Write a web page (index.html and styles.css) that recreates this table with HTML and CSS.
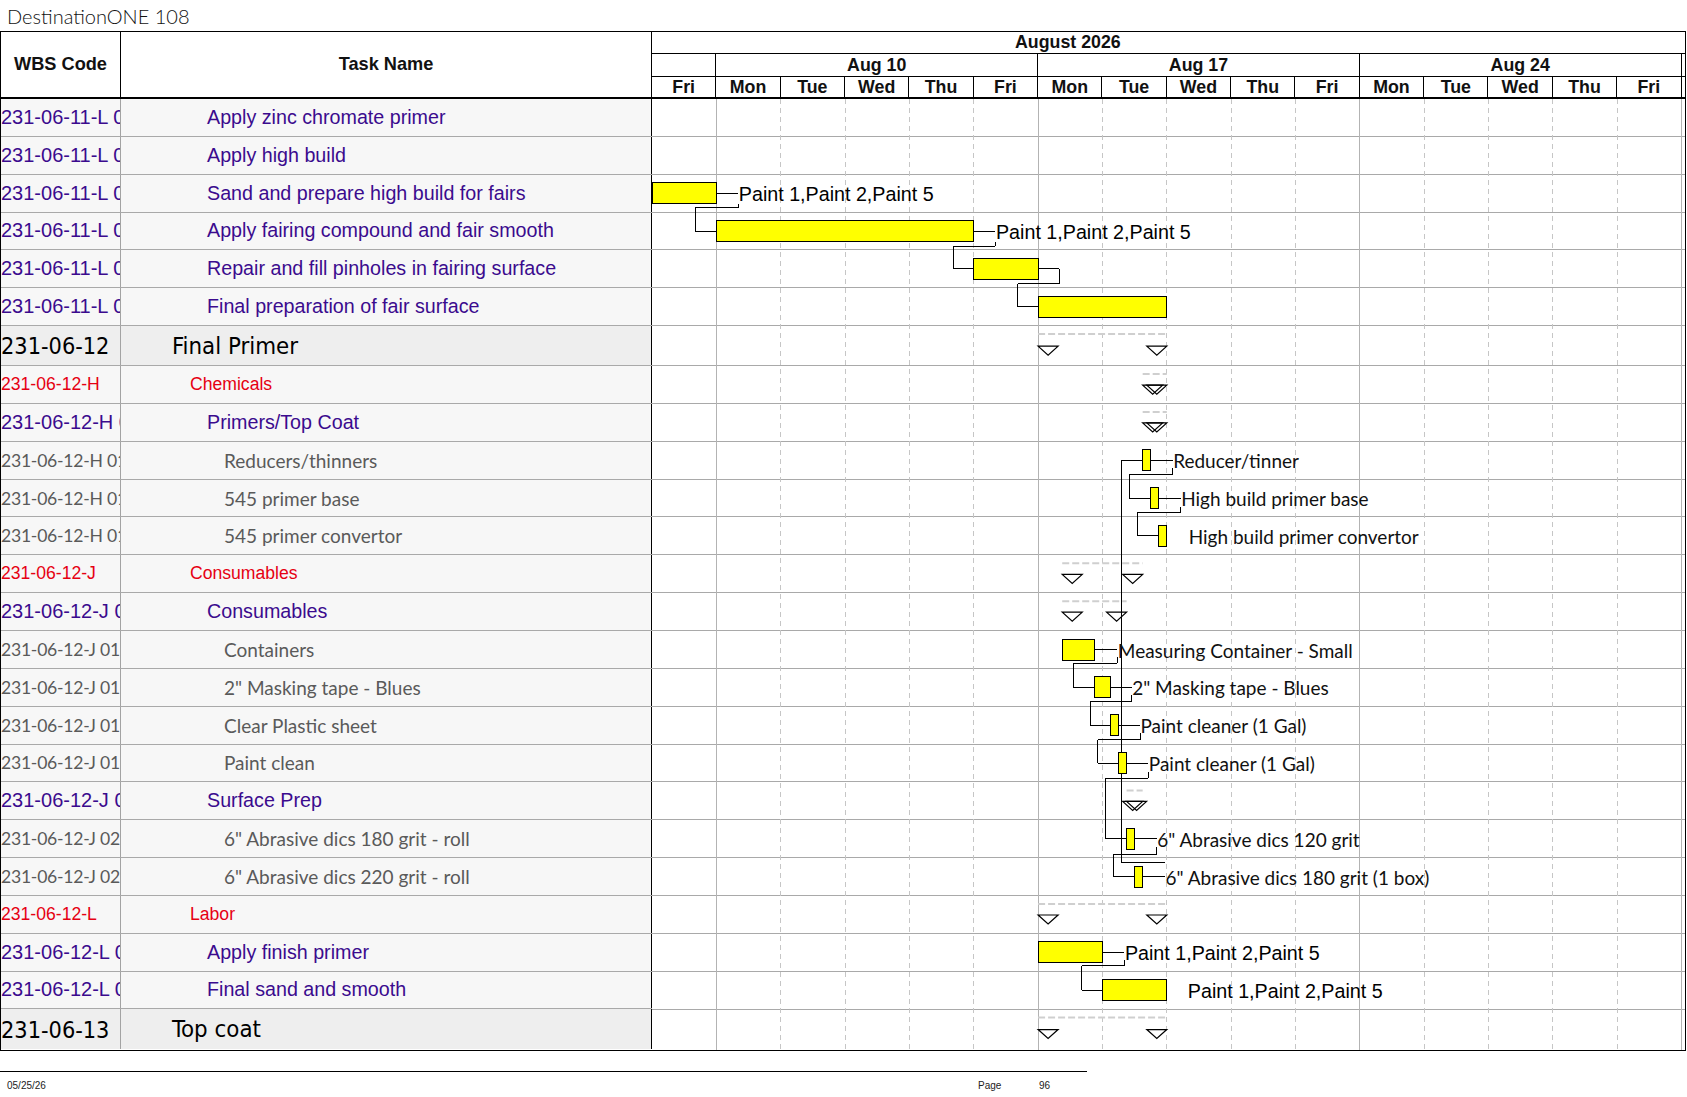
FILE: index.html
```html
<!DOCTYPE html>
<html>
<head>
<meta charset="utf-8">
<title>DestinationONE 108</title>
<link rel="stylesheet" href="styles.css">
</head>
<body>
<div class="page">
  <div class="title">DestinationONE 108</div>
  <div class="sheet">
    <div class="head">
      <div class="h-wbs">WBS Code</div>
      <div class="h-task">Task Name</div>
      <div class="h-time">
        <div class="month"><span>August 2026</span></div>
        <div class="weeks">
          <div class="wk first"></div>
          <div class="wk">Aug 10</div>
          <div class="wk">Aug 17</div>
          <div class="wk">Aug 24</div>
          <div class="wk rest"></div>
        </div>
        <div class="days">
          <div class="dy">Fri</div>
          <div class="dy">Mon</div><div class="dy">Tue</div><div class="dy">Wed</div><div class="dy">Thu</div><div class="dy">Fri</div>
          <div class="dy">Mon</div><div class="dy">Tue</div><div class="dy">Wed</div><div class="dy">Thu</div><div class="dy">Fri</div>
          <div class="dy">Mon</div><div class="dy">Tue</div><div class="dy">Wed</div><div class="dy">Thu</div><div class="dy">Fri</div>
          <div class="dy rest"></div>
        </div>
      </div>
    </div>
    <div class="body">
      <div class="table">
        <div class="row l3"><div class="wbs">231-06-11-L 01</div><div class="task">Apply zinc chromate primer</div></div>
        <div class="row l3"><div class="wbs">231-06-11-L 02</div><div class="task">Apply high build</div></div>
        <div class="row l3"><div class="wbs">231-06-11-L 03</div><div class="task">Sand and prepare high build for fairs</div></div>
        <div class="row l3"><div class="wbs">231-06-11-L 04</div><div class="task">Apply fairing compound and fair smooth</div></div>
        <div class="row l3"><div class="wbs">231-06-11-L 05</div><div class="task">Repair and fill pinholes in fairing surface</div></div>
        <div class="row l3"><div class="wbs">231-06-11-L 06</div><div class="task">Final preparation of fair surface</div></div>
        <div class="row l1"><div class="wbs">231-06-12</div><div class="task">Final Primer</div></div>
        <div class="row l2"><div class="wbs">231-06-12-H</div><div class="task">Chemicals</div></div>
        <div class="row l3"><div class="wbs">231-06-12-H 01</div><div class="task">Primers/Top Coat</div></div>
        <div class="row l4"><div class="wbs">231-06-12-H 01.01</div><div class="task">Reducers/thinners</div></div>
        <div class="row l4"><div class="wbs">231-06-12-H 01.02</div><div class="task">545 primer base</div></div>
        <div class="row l4"><div class="wbs">231-06-12-H 01.03</div><div class="task">545 primer convertor</div></div>
        <div class="row l2"><div class="wbs">231-06-12-J</div><div class="task">Consumables</div></div>
        <div class="row l3"><div class="wbs">231-06-12-J 01</div><div class="task">Consumables</div></div>
        <div class="row l4"><div class="wbs">231-06-12-J 01.01</div><div class="task">Containers</div></div>
        <div class="row l4"><div class="wbs">231-06-12-J 01.02</div><div class="task">2" Masking tape - Blues</div></div>
        <div class="row l4"><div class="wbs">231-06-12-J 01.03</div><div class="task">Clear Plastic sheet</div></div>
        <div class="row l4"><div class="wbs">231-06-12-J 01.04</div><div class="task">Paint clean</div></div>
        <div class="row l3"><div class="wbs">231-06-12-J 02</div><div class="task">Surface Prep</div></div>
        <div class="row l4"><div class="wbs">231-06-12-J 02.01</div><div class="task">6" Abrasive dics 180 grit - roll</div></div>
        <div class="row l4"><div class="wbs">231-06-12-J 02.02</div><div class="task">6" Abrasive dics 220 grit - roll</div></div>
        <div class="row l2"><div class="wbs">231-06-12-L</div><div class="task">Labor</div></div>
        <div class="row l3"><div class="wbs">231-06-12-L 01</div><div class="task">Apply finish primer</div></div>
        <div class="row l3"><div class="wbs">231-06-12-L 02</div><div class="task">Final sand and smooth</div></div>
        <div class="row l1 last"><div class="wbs">231-06-13</div><div class="task">Top coat</div></div>
      </div>
      <svg class="chart" width="1033" height="950.55" viewBox="0 0 1033 950.55" xmlns="http://www.w3.org/2000/svg">
        <g class="grid-h" shape-rendering="crispEdges">
          <line x1="0" x2="1033" y1="37.35" y2="37.35"/>
          <line x1="0" x2="1033" y1="75.2" y2="75.2"/>
          <line x1="0" x2="1033" y1="113.05" y2="113.05"/>
          <line x1="0" x2="1033" y1="150.9" y2="150.9"/>
          <line x1="0" x2="1033" y1="188.75" y2="188.75"/>
          <line x1="0" x2="1033" y1="226.6" y2="226.6"/>
          <line x1="0" x2="1033" y1="266.6" y2="266.6"/>
          <line x1="0" x2="1033" y1="304.45" y2="304.45"/>
          <line x1="0" x2="1033" y1="342.3" y2="342.3"/>
          <line x1="0" x2="1033" y1="380.15" y2="380.15"/>
          <line x1="0" x2="1033" y1="418" y2="418"/>
          <line x1="0" x2="1033" y1="455.85" y2="455.85"/>
          <line x1="0" x2="1033" y1="493.7" y2="493.7"/>
          <line x1="0" x2="1033" y1="531.55" y2="531.55"/>
          <line x1="0" x2="1033" y1="569.4" y2="569.4"/>
          <line x1="0" x2="1033" y1="607.25" y2="607.25"/>
          <line x1="0" x2="1033" y1="645.1" y2="645.1"/>
          <line x1="0" x2="1033" y1="682.95" y2="682.95"/>
          <line x1="0" x2="1033" y1="720.8" y2="720.8"/>
          <line x1="0" x2="1033" y1="758.65" y2="758.65"/>
          <line x1="0" x2="1033" y1="796.5" y2="796.5"/>
          <line x1="0" x2="1033" y1="834.35" y2="834.35"/>
          <line x1="0" x2="1033" y1="872.2" y2="872.2"/>
          <line x1="0" x2="1033" y1="910.05" y2="910.05"/>
        </g>
        <g class="grid-week" shape-rendering="crispEdges">
          <line x1="64.35" x2="64.35" y1="0" y2="951"/>
          <line x1="386.1" x2="386.1" y1="0" y2="951"/>
          <line x1="707.85" x2="707.85" y1="0" y2="951"/>
          <line x1="1029.6" x2="1029.6" y1="0" y2="951"/>
        </g>
        <g class="grid-day" shape-rendering="crispEdges">
          <line x1="128.7" x2="128.7" y1="0" y2="951"/>
          <line x1="193.05" x2="193.05" y1="0" y2="951"/>
          <line x1="257.4" x2="257.4" y1="0" y2="951"/>
          <line x1="321.75" x2="321.75" y1="0" y2="951"/>
          <line x1="450.45" x2="450.45" y1="0" y2="951"/>
          <line x1="514.8" x2="514.8" y1="0" y2="951"/>
          <line x1="579.15" x2="579.15" y1="0" y2="951"/>
          <line x1="643.5" x2="643.5" y1="0" y2="951"/>
          <line x1="772.2" x2="772.2" y1="0" y2="951"/>
          <line x1="836.55" x2="836.55" y1="0" y2="951"/>
          <line x1="900.9" x2="900.9" y1="0" y2="951"/>
          <line x1="965.25" x2="965.25" y1="0" y2="951"/>
        </g>

        <g class="summary">
          <line x1="386.1" x2="514.8" y1="235.1" y2="235.1"/>
          <line x1="490.67" x2="514.8" y1="275.1" y2="275.1"/>
          <line x1="490.67" x2="514.8" y1="312.95" y2="312.95"/>
          <line x1="410.23" x2="490.67" y1="464.35" y2="464.35"/>
          <line x1="410.23" x2="474.58" y1="502.2" y2="502.2"/>
          <line x1="474.58" x2="490.67" y1="691.45" y2="691.45"/>
          <line x1="386.1" x2="514.8" y1="805" y2="805"/>
          <line x1="386.1" x2="514.8" y1="918.55" y2="918.55"/>
        </g>
        <g class="tri">
          <polygon points="386.1,247.1 406.1,247.1 396.1,256.1"/>
          <polygon points="494.8,247.1 514.8,247.1 504.8,256.1"/>
          <polygon points="490.67,286.1 510.67,286.1 500.67,295.1"/>
          <polygon points="494.8,286.1 514.8,286.1 504.8,295.1"/>
          <polygon points="490.67,323.95 510.67,323.95 500.67,332.95"/>
          <polygon points="494.8,323.95 514.8,323.95 504.8,332.95"/>
          <polygon points="410.23,475.35 430.23,475.35 420.23,484.35"/>
          <polygon points="470.67,475.35 490.67,475.35 480.67,484.35"/>
          <polygon points="410.23,513.2 430.23,513.2 420.23,522.2"/>
          <polygon points="454.58,513.2 474.58,513.2 464.58,522.2"/>
          <polygon points="474.58,702.45 494.58,702.45 484.58,711.45"/>
          <polygon points="470.67,702.45 490.67,702.45 480.67,711.45"/>
          <polygon points="386.1,816 406.1,816 396.1,825"/>
          <polygon points="494.8,816 514.8,816 504.8,825"/>
          <polygon points="386.1,930.55 406.1,930.55 396.1,939.55"/>
          <polygon points="494.8,930.55 514.8,930.55 504.8,939.55"/>
        </g>

        <g class="links" shape-rendering="crispEdges">
          <line x1="64.35" x2="86.2" y1="94.2" y2="94.2"/>
          <polyline points="86.2,105.2 86.2,108.7 43.4,108.7 43.4,132.05 64.35,132.05"/>
          <line x1="321.75" x2="343.4" y1="132.05" y2="132.05"/>
          <polyline points="343.4,143.25 343.4,147.05 301.2,147.05 301.2,169.9 321.75,169.9"/>
          <polyline points="386.1,169.9 407.3,169.9 407.3,185 365.5,185 365.5,207.75 386.1,207.75"/>

          <polyline points="490.67,361.3 469,361.3 469,763.3 513,763.3"/>
          <line x1="498.71" x2="520.7" y1="361.3" y2="361.3"/>
          <polyline points="520.7,369.3 520.7,375.3 477.3,375.3 477.3,399.15 498.71,399.15"/>
          <line x1="506.76" x2="528.7" y1="399.15" y2="399.15"/>
          <polyline points="528.7,407.65 528.7,413.3 485.3,413.3 485.3,437 506.76,437"/>

          <line x1="442.41" x2="465.3" y1="550.55" y2="550.55"/>
          <polyline points="465.3,558.05 465.3,564.3 421.3,564.3 421.3,588.4 442.41,588.4"/>
          <line x1="458.49" x2="479.7" y1="588.4" y2="588.4"/>
          <polyline points="479.7,595.9 479.7,602.7 438,602.7 438,626.25 458.49,626.25"/>
          <line x1="466.54" x2="488" y1="626.25" y2="626.25"/>
          <polyline points="488,634.25 488,641 445.7,641 445.7,664.1 466.54,664.1"/>
          <line x1="474.58" x2="496.3" y1="664.1" y2="664.1"/>
          <polyline points="496.3,672.6 496.3,679.3 453.7,679.3 453.7,739.8 474.58,739.8"/>
          <line x1="482.63" x2="504.7" y1="739.8" y2="739.8"/>
          <polyline points="504.7,747.7 504.7,755.3 461.3,755.3 461.3,777.65 482.63,777.65"/>
          <line x1="490.67" x2="513" y1="777.65" y2="777.65"/>

          <line x1="450.45" x2="472.3" y1="853.35" y2="853.35"/>
          <polyline points="472.3,860.85 472.3,867 429.7,867 429.7,891.2 450.45,891.2"/>
        </g>

        <g class="bars" shape-rendering="crispEdges">
          <rect x="0.5" y="83.7" width="63.85" height="21"/>
          <rect x="64.35" y="121.55" width="257.4" height="21"/>
          <rect x="321.75" y="159.4" width="64.35" height="21"/>
          <rect x="386.1" y="197.25" width="128.7" height="21"/>
          <rect x="490.67" y="350.8" width="8.04" height="21"/>
          <rect x="498.71" y="388.65" width="8.05" height="21"/>
          <rect x="506.76" y="426.5" width="8.04" height="21"/>
          <rect x="410.23" y="540.05" width="32.18" height="21"/>
          <rect x="442.41" y="577.9" width="16.08" height="21"/>
          <rect x="458.49" y="615.75" width="8.05" height="21"/>
          <rect x="466.54" y="653.6" width="8.04" height="21"/>
          <rect x="474.58" y="729.3" width="8.05" height="21"/>
          <rect x="482.63" y="767.15" width="8.04" height="21"/>
          <rect x="386.1" y="842.85" width="64.35" height="21"/>
          <rect x="450.45" y="880.7" width="64.35" height="21"/>
        </g>

        <g class="lbl-a">
          <text x="86.8" y="102.2">Paint 1,Paint 2,Paint 5</text>
          <text x="344" y="140">Paint 1,Paint 2,Paint 5</text>
          <text x="472.9" y="861.3">Paint 1,Paint 2,Paint 5</text>
          <text x="535.8" y="899.2">Paint 1,Paint 2,Paint 5</text>
        </g>
        <g class="lbl-c">
          <text x="521.2" y="369.3">Reducer/tinner</text>
          <text x="529.2" y="407.15">High build primer base</text>
          <text x="536.7" y="445">High build primer convertor</text>
          <text x="465.8" y="558.55">Measuring Container - Small</text>
          <text x="480.2" y="596.4">2" Masking tape - Blues</text>
          <text x="488.5" y="634.25">Paint cleaner (1 Gal)</text>
          <text x="496.8" y="672.1">Paint cleaner (1 Gal)</text>
          <text x="505.2" y="747.8">6" Abrasive dics 120 grit</text>
          <text x="513.5" y="785.65">6" Abrasive dics 180 grit (1 box)</text>
        </g>
      </svg>
    </div>
  </div>
  <div class="footer">
    <span class="f-date">05/25/26</span>
    <span class="f-page">Page</span>
    <span class="f-num">96</span>
  </div>
</div>
</body>
</html>
```

FILE: styles.css
```css
* { box-sizing: border-box; }

html, body {
  margin: 0;
  padding: 0;
  background: #ffffff;
}

body {
  font-family: "Liberation Sans", Arial, sans-serif;
  color: #000;
}

.page {
  width: 1687px;
  height: 1097px;
  overflow: hidden;
}

.title {
  height: 31px;
  padding: 4px 0 0 7px;
  font-family: Lato, "Liberation Sans", sans-serif;
  font-weight: 300;
  font-size: 20px;
  line-height: 24px;
  color: #111;
}

.sheet {
  width: 1686px;
  border: 1px solid #000;
}

/* ---------- header ---------- */
.head {
  display: grid;
  grid-template-columns: 120px 531px 1fr;
  height: 67px;
  border-bottom: 2px solid #000;
  font-weight: bold;
  font-size: 17.8px;
  color: #111;
}

.h-wbs,
.h-task {
  display: flex;
  align-items: center;
  justify-content: center;
  border-right: 1px solid #000;
  font-size: 18.2px;
}

.h-time {
  display: grid;
  grid-template-rows: 22px 23px 20px;
}

.month {
  border-bottom: 1px solid #000;
  line-height: 20px;
  padding-left: 363px;
  white-space: nowrap;
}

.weeks,
.days {
  display: flex;
}

.weeks {
  border-bottom: 1px solid #000;
}

.wk {
  width: 321.75px;
  flex: none;
  border-right: 1px solid #000;
  text-align: center;
  line-height: 22px;
}

.wk.first {
  width: 64.35px;
}

.wk.rest,
.dy.rest {
  flex: 1;
  width: auto;
  border-right: none;
}

.dy {
  width: 64.35px;
  flex: none;
  border-right: 1px solid #000;
  text-align: center;
  line-height: 20px;
}

/* ---------- body ---------- */
.body {
  display: grid;
  grid-template-columns: 651px 1fr;
}

.table {
  display: flex;
  flex-direction: column;
}

.row {
  display: grid;
  grid-template-columns: 120px 531px;
  height: 37.85px;
  border-bottom: 1px solid #a9a9a9;
  background: #f7f7f7;
}

.row.last {
  border-bottom: none;
}

.wbs,
.task {
  display: flex;
  align-items: center;
  white-space: nowrap;
  overflow: hidden;
}

.wbs {
  border-right: 1px solid #a3a3a3;
  padding-left: 0;
}

.task {
  border-right: 1px solid #000;
}

/* level 1: phase */
.row.l1 {
  height: 40px;
  background: #eeeeee;
  font-family: "DejaVu Sans Condensed", "DejaVu Sans", sans-serif;
  font-stretch: condensed;
  font-size: 23.3px;
  color: #000;
}

.row.l1 .task {
  padding-left: 51px;
  font-size: 23.8px;
}

/* level 2: category */
.row.l2 {
  font-size: 17.6px;
  color: #e60012;
}

.row.l2 .task {
  padding-left: 69px;
}

/* level 3: task */
.row.l3 {
  font-size: 20px;
  color: #3b0b8e;
}

.row.l3 .task {
  padding-left: 86px;
  font-size: 19.7px;
}

/* level 4: item */
.row.l4 {
  font-family: Lato, "Liberation Sans", sans-serif;
  font-size: 19px;
  color: #5a5a5a;
}

.row.l4 .wbs {
  font-size: 17.6px;
  letter-spacing: -0.25px;
}

.row.l4 .task {
  padding-left: 103px;
}

/* ---------- chart ---------- */
.chart {
  display: block;
  background: #ffffff;
}

.grid-h line {
  stroke: #a9a9a9;
  stroke-width: 1;
}

.grid-week line {
  stroke: #b3b3b3;
  stroke-width: 1;
}

.grid-day line {
  stroke: #c6c6c6;
  stroke-width: 1;
  stroke-dasharray: 5 4;
}

.summary line {
  stroke: #cfcfcf;
  stroke-width: 2;
  stroke-dasharray: 7 3;
}

.tri polygon {
  fill: none;
  stroke: #000;
  stroke-width: 1.2;
}

.links line,
.links polyline {
  fill: none;
  stroke: #000;
  stroke-width: 1;
}

.bars rect {
  fill: #ffff00;
  stroke: #000;
  stroke-width: 1;
}

.lbl-a text {
  font-family: "Liberation Sans", Arial, sans-serif;
  font-size: 19.7px;
  fill: #000;
}

.lbl-c text {
  font-family: Lato, "Liberation Sans", sans-serif;
  font-size: 19px;
  fill: #111;
}

/* ---------- footer ---------- */
.footer {
  margin-top: 20px;
  width: 1087px;
  height: 26px;
  border-top: 1px solid #000;
  font-size: 10px;
  line-height: 12px;
  color: #222;
  display: flex;
  padding-top: 8px;
}

.f-date {
  margin-left: 7px;
  width: 971px;
}

.f-page {
  width: 61px;
}
```
